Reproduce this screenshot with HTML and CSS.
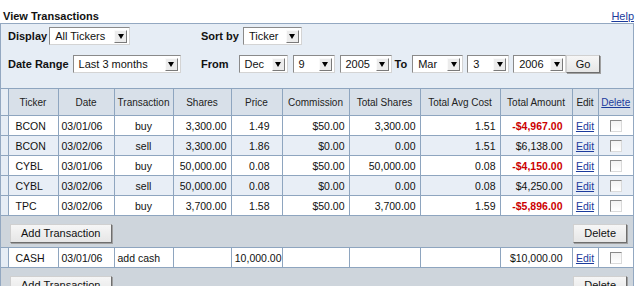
FILE: index.html
```html
<!DOCTYPE html>
<html>
<head>
<meta charset="utf-8">
<title>View Transactions</title>
<link rel="stylesheet" href="styles.css">
</head>
<body>
<div class="page">
  <div class="titlebar">
    <span class="title">View Transactions</span>
    <a class="help" href="#">Help</a>
  </div>
  <div class="panel">
    <div class="filters">
      <div class="frow">
        <div class="fgroup">
          <span class="lbl">Display</span>
          <span class="sel w-all gap2"><span class="val">All Tickers</span><span class="arr"></span></span>
        </div>
        <div class="fgroup">
          <span class="lbl">Sort by</span>
          <span class="sel w-ticker gap4"><span class="val">Ticker</span><span class="arr"></span></span>
        </div>
      </div>
      <div class="frow">
        <div class="fgroup">
          <span class="lbl">Date Range</span>
          <span class="sel w-range gap4"><span class="val">Last 3 months</span><span class="arr"></span></span>
        </div>
        <div class="fgroup">
          <span class="lbl">From</span>
          <span class="sel w-mon gap10"><span class="val">Dec</span><span class="arr"></span></span>
          <span class="sel w-day gap5"><span class="val">9</span><span class="arr"></span></span>
          <span class="sel w-yr gap5"><span class="val">2005</span><span class="arr"></span></span>
          <span class="lbl gap3">To</span>
          <span class="sel w-mon2 gap5"><span class="val">Mar</span><span class="arr"></span></span>
          <span class="sel w-day gap4"><span class="val">3</span><span class="arr"></span></span>
          <span class="sel w-yr2 gap4"><span class="val">2006</span><span class="arr"></span></span>
          <button class="btn go gap4" type="button">Go</button>
        </div>
      </div>
    </div>
    <table class="tx">
      <colgroup>
        <col class="c-sp"><col class="c-tick"><col class="c-date"><col class="c-trans"><col class="c-shares"><col class="c-price"><col class="c-comm"><col class="c-tsh"><col class="c-avg"><col class="c-amt"><col class="c-edit"><col class="c-del">
      </colgroup>
      <thead>
        <tr>
          <th class="sp"></th>
          <th>Ticker</th>
          <th>Date</th>
          <th>Transaction</th>
          <th>Shares</th>
          <th>Price</th>
          <th>Commission</th>
          <th>Total Shares</th>
          <th>Total Avg Cost</th>
          <th>Total Amount</th>
          <th>Edit</th>
          <th><a href="#">Delete</a></th>
        </tr>
      </thead>
      <tbody>
        <tr>
          <td class="sp"></td><td class="tick">BCON</td><td class="date">03/01/06</td><td class="trans">buy</td>
          <td class="num">3,300.00</td><td class="price">1.49</td><td class="num">$50.00</td><td class="num">3,300.00</td>
          <td class="num">1.51</td><td class="amt neg">-$4,967.00</td><td class="ctr"><a href="#">Edit</a></td><td class="ctr"><span class="cb"></span></td>
        </tr>
        <tr class="alt">
          <td class="sp"></td><td class="tick">BCON</td><td class="date">03/02/06</td><td class="trans">sell</td>
          <td class="num">3,300.00</td><td class="price">1.86</td><td class="num">$0.00</td><td class="num">0.00</td>
          <td class="num">1.51</td><td class="amt">$6,138.00</td><td class="ctr"><a href="#">Edit</a></td><td class="ctr"><span class="cb"></span></td>
        </tr>
        <tr>
          <td class="sp"></td><td class="tick">CYBL</td><td class="date">03/01/06</td><td class="trans">buy</td>
          <td class="num">50,000.00</td><td class="price">0.08</td><td class="num">$50.00</td><td class="num">50,000.00</td>
          <td class="num">0.08</td><td class="amt neg">-$4,150.00</td><td class="ctr"><a href="#">Edit</a></td><td class="ctr"><span class="cb"></span></td>
        </tr>
        <tr class="alt">
          <td class="sp"></td><td class="tick">CYBL</td><td class="date">03/02/06</td><td class="trans">sell</td>
          <td class="num">50,000.00</td><td class="price">0.08</td><td class="num">$0.00</td><td class="num">0.00</td>
          <td class="num">0.08</td><td class="amt">$4,250.00</td><td class="ctr"><a href="#">Edit</a></td><td class="ctr"><span class="cb"></span></td>
        </tr>
        <tr>
          <td class="sp"></td><td class="tick">TPC</td><td class="date">03/02/06</td><td class="trans">buy</td>
          <td class="num">3,700.00</td><td class="price">1.58</td><td class="num">$50.00</td><td class="num">3,700.00</td>
          <td class="num">1.59</td><td class="amt neg">-$5,896.00</td><td class="ctr"><a href="#">Edit</a></td><td class="ctr"><span class="cb"></span></td>
        </tr>
        <tr class="actions">
          <td colspan="12"><div class="actbar"><button class="btn" type="button">Add Transaction</button><button class="btn" type="button">Delete</button></div></td>
        </tr>
        <tr>
          <td class="sp"></td><td class="tick">CASH</td><td class="date">03/01/06</td><td class="trans-l">add cash</td>
          <td class="num"></td><td class="price tight">10,000.00</td><td class="num"></td><td class="num"></td>
          <td class="num"></td><td class="amt">$10,000.00</td><td class="ctr"><a href="#">Edit</a></td><td class="ctr"><span class="cb"></span></td>
        </tr>
        <tr class="actions">
          <td colspan="12"><div class="actbar"><button class="btn" type="button">Add Transaction</button><button class="btn" type="button">Delete</button></div></td>
        </tr>
      </tbody>
    </table>
  </div>
</div>
</body>
</html>
```

FILE: styles.css
```css
html, body {
  margin: 0;
  padding: 0;
  background: #fff;
}

body {
  font-family: "Liberation Sans", Arial, sans-serif;
  color: #111;
  overflow: hidden;
}

.page {
  width: 635px;
}

.titlebar {
  display: flex;
  justify-content: space-between;
  align-items: flex-end;
  height: 23px;
  padding: 0 1px 0 3px;
  box-sizing: border-box;
  line-height: 13px;
}

.title {
  font-size: 11px;
  font-weight: bold;
  color: #111;
}

.help {
  font-size: 11px;
  color: #1b3b9c;
  text-decoration: underline;
}

.panel {
  width: 634px;
  box-sizing: border-box;
  border: 1px solid #93a8c1;
  border-bottom: none;
  background: #e6edf5;
}

.filters {
  padding: 3px 0 15px 7px;
  display: flex;
  flex-direction: column;
  gap: 10px;
}

.frow {
  display: flex;
  align-items: center;
  height: 18px;
}

.fgroup {
  display: flex;
  align-items: center;
}

.fgroup:first-child {
  width: 193px;
}

.lbl {
  font-size: 11px;
  font-weight: bold;
  color: #111;
  white-space: nowrap;
}

.sel {
  display: inline-flex;
  align-items: center;
  height: 18px;
  box-sizing: border-box;
  border: 1px solid;
  border-color: #8a8a8a #d4d4d4 #d4d4d4 #8a8a8a;
  background: #fff;
  padding: 0 2px 0 5px;
  font-size: 11px;
  color: #111;
}

.sel .val {
  flex: 1;
  white-space: nowrap;
}

.sel .arr {
  width: 13px;
  height: 13px;
  box-sizing: border-box;
  background: #ececec;
  border: 1px solid;
  border-color: #fafafa #7a7a7a #7a7a7a #fafafa;
  display: flex;
  align-items: center;
  justify-content: center;
}

.sel .arr::before {
  content: "";
  width: 0;
  height: 0;
  border-left: 3.5px solid transparent;
  border-right: 3.5px solid transparent;
  border-top: 5px solid #000;
}

.w-all { width: 81px; }
.w-ticker { width: 59px; }
.w-range { width: 108px; }
.w-mon { width: 49px; }
.w-day { width: 42px; }
.w-yr { width: 52px; }
.w-mon2 { width: 51px; }
.w-yr2 { width: 53px; }

.gap2 { margin-left: 2px; }
.gap3 { margin-left: 3px; }
.gap4 { margin-left: 4px; }
.gap5 { margin-left: 5px; }
.gap10 { margin-left: 10px; }

.btn {
  font-family: "Liberation Sans", Arial, sans-serif;
  font-size: 11px;
  color: #111;
  height: 19px;
  padding: 0 10px;
  background: linear-gradient(#f6f6f6, #e6e6e6);
  border: 1px solid;
  border-color: #d0d0d0 #6e6e6e #6e6e6e #d0d0d0;
  box-shadow: 1px 1px 0 #a0a0a0;
  border-radius: 0;
  line-height: 17px;
  margin: 0;
}

.btn.go {
  width: 34px;
  height: 18px;
  padding: 0;
}

.tx {
  width: 632px;
  table-layout: fixed;
  border-collapse: collapse;
  font-size: 10.5px;
}

.c-sp { width: 7px; }
.c-tick { width: 50px; }
.c-date { width: 56px; }
.c-trans { width: 59px; }
.c-shares { width: 58px; }
.c-price { width: 51px; }
.c-comm { width: 67px; }
.c-tsh { width: 71px; }
.c-avg { width: 80px; }
.c-amt { width: 72px; }
.c-edit { width: 26px; }
.c-del { width: 35px; }

.tx th, .tx td {
  border: 1px solid #8ea5bf;
  padding: 0 4px;
  white-space: nowrap;
  overflow: visible;
}

.tx th:first-child, .tx td:first-child {
  border-left: none;
}

.tx th:last-child, .tx td:last-child {
  border-right: none;
}

.tx th {
  height: 26px;
  padding: 0;
  background: #d8e0e9;
  font-weight: normal;
  font-size: 10px;
  color: #222;
  text-align: center;
}

.tx th.sp, .tx td.sp {
  padding: 0;
  background: #e6edf5;
}

.tx td {
  height: 19px;
  background: #fff;
  color: #111;
}

.tx tr.alt td {
  background: #e8eef6;
}

.tx tr.alt td.sp {
  background: #e6edf5;
}

.tx td.tick { padding-left: 7px; }
.tx td.date { padding-left: 3px; }
.tx td.trans { text-align: center; }
.tx td.trans-l { padding-left: 3px; }
.tx td.num { text-align: right; padding-right: 4px; }
.tx td.price { text-align: right; padding-right: 12px; }
.tx td.price.tight { padding-right: 0; padding-left: 0; }
.tx td.amt { text-align: right; padding-right: 9px; }
.tx td.ctr { text-align: center; padding: 0; }

.tx td.neg {
  color: #cc0000;
  font-weight: bold;
}

.tx a {
  color: #1b3b9c;
  text-decoration: underline;
}

.cb {
  display: inline-block;
  vertical-align: middle;
  width: 12px;
  height: 12px;
  box-sizing: border-box;
  border: 1px solid;
  border-color: #8a8a8a #dadada #dadada #8a8a8a;
  background: linear-gradient(#f2f2f2, #ffffff);
}

.tx tr.actions td {
  background: #ced5dc;
  padding: 8px 6px 4px 9px;
  height: auto;
}

.actbar {
  display: flex;
  justify-content: space-between;
  align-items: center;
}
```
